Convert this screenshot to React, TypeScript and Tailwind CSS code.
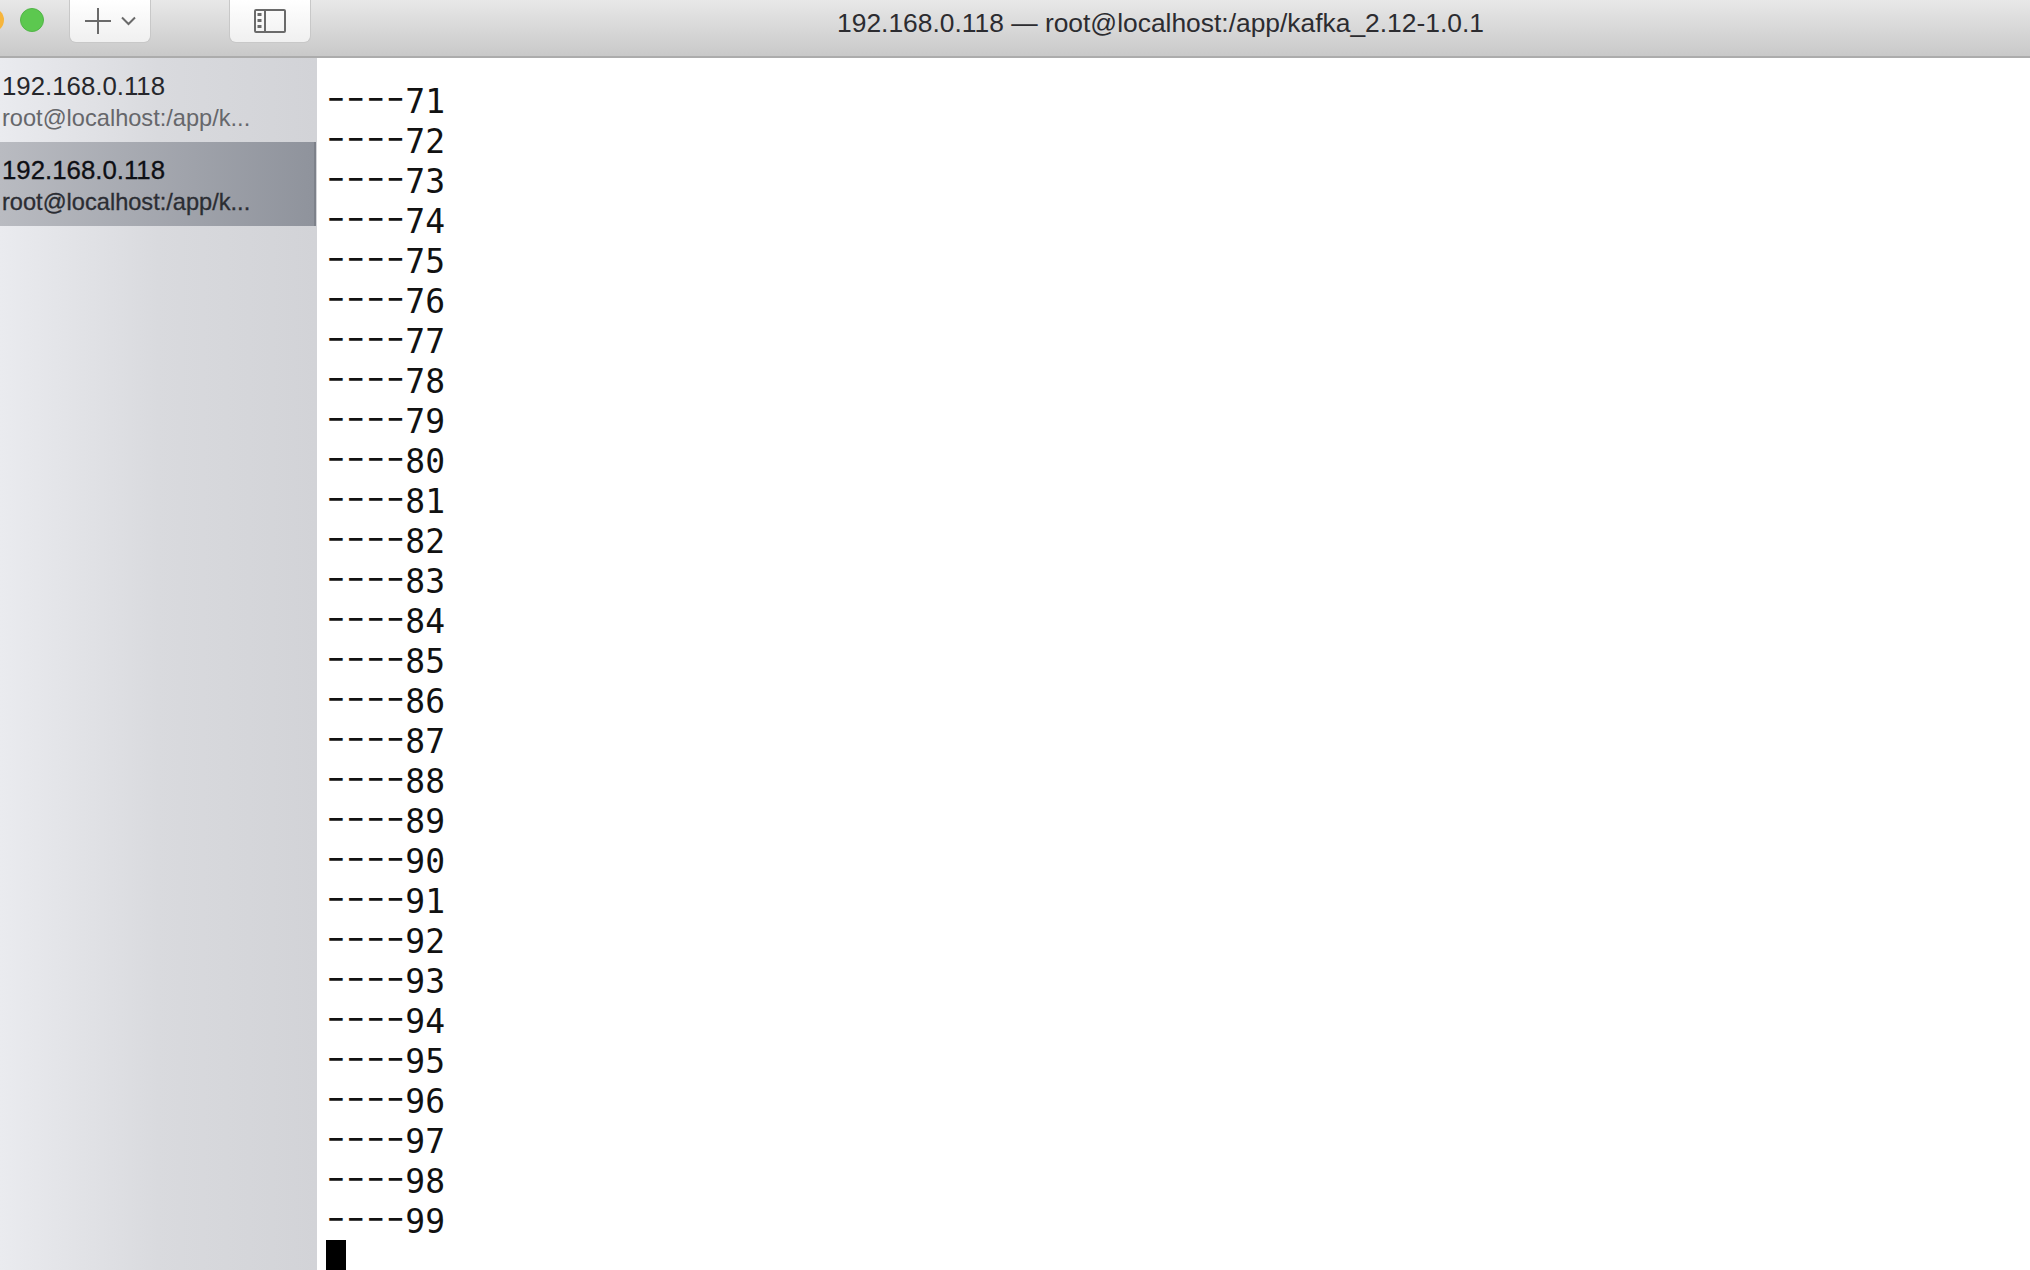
const numbers = Array.from({ length: 29 }, (_, i) => 71 + i);

function Tab({ selected }: { selected?: boolean }) {
  return (
    <div
      className={`h-[84px] pl-[2px] pt-[10px] ${
        selected
          ? "bg-gradient-to-r from-[#b9bbc1] to-[#8f939c] border-r-2 border-r-[#7d818a] mr-[1px]"
          : ""
      }`}
    >
      <div className={`text-[25.8px] leading-[36px] whitespace-nowrap ${selected ? "text-[#0e0f14] [-webkit-text-stroke:0.3px]" : "text-[#26272c]"}`}>
        192.168.0.118
      </div>
      <div className={`text-[23.6px] leading-[28px] whitespace-nowrap ${selected ? "text-[#2b2d33] [-webkit-text-stroke:0.3px]" : "text-[#66676b]"}`}>
        root@localhost:/app/k...
      </div>
    </div>
  );
}

export default function App() {
  return (
    <div className="h-[1270px] w-[2030px] overflow-hidden flex flex-col bg-white font-['Liberation_Sans',Arial,sans-serif]">
      <header className="h-[58px] shrink-0 flex bg-gradient-to-b from-[#e8e8e8] to-[#c9c9c9] border-b-2 border-b-[#acacac]">
        <div className="w-[4px] h-[24px] mt-[8px] overflow-hidden relative shrink-0">
          <div className="absolute right-0 w-[24px] h-[24px] rounded-full bg-[#f6b53c]" />
        </div>
        <div className="w-[24px] h-[24px] mt-[8px] ml-[16px] rounded-full bg-[#5cc84f] border border-[#52b548] shrink-0" />
        <div className="ml-[25px] w-[82px] h-[43px] bg-gradient-to-b from-white to-[#f0f0f0] rounded-b-[7px] border-b border-x border-[#c8c8c8] flex items-center justify-center gap-[9px] shrink-0">
          <svg width="28" height="28" viewBox="0 0 28 28" fill="none" stroke="#6a6a6a" strokeWidth="2">
            <path d="M14 1v26M1 14h26" />
          </svg>
          <svg width="15" height="10" viewBox="0 0 15 10" fill="none" stroke="#6a6a6a" strokeWidth="2">
            <path d="M1 1.5l6.5 6.5 6.5-6.5" />
          </svg>
        </div>
        <div className="ml-[78px] w-[82px] h-[43px] bg-gradient-to-b from-white to-[#f0f0f0] rounded-b-[7px] border-b border-x border-[#c8c8c8] flex items-center justify-center shrink-0">
          <svg width="32" height="24" viewBox="0 0 32 24" fill="none" stroke="#6a6a6a" strokeWidth="2">
            <rect x="1" y="1" width="30" height="22" rx="1" />
            <path d="M11 1v22" />
            <path d="M3.5 5.5h4M3.5 11.5h4M3.5 17.5h4" strokeWidth="3" />
          </svg>
        </div>
        <div className="flex-1 text-center pr-[20px] text-[26.4px] leading-[46px] text-[#2c2c30] whitespace-nowrap">
          192.168.0.118 — root@localhost:/app/kafka_2.12-1.0.1
        </div>
      </header>
      <div className="flex-1 flex min-h-0">
        <aside className="w-[317px] shrink-0 bg-gradient-to-r from-[#eaebef] via-[#d9dade] to-[#d2d3d7]">
          <Tab />
          <Tab selected />
        </aside>
        <main className="flex-1 pl-[9px] pt-[24px] bg-white font-['DejaVu_Sans_Mono',monospace] text-[33px] leading-[40px] text-[#111]">
          {numbers.map((n) => (
            <div key={n} className="h-[40px] whitespace-pre">
              <span className="font-['Inter',sans-serif] font-light text-[44px] leading-[20px] tracking-[-0.1px]">----</span>
              {n}
            </div>
          ))}
          <div className="w-[20px] h-[38px] -mt-[2px] bg-black" />
        </main>
      </div>
    </div>
  );
}
